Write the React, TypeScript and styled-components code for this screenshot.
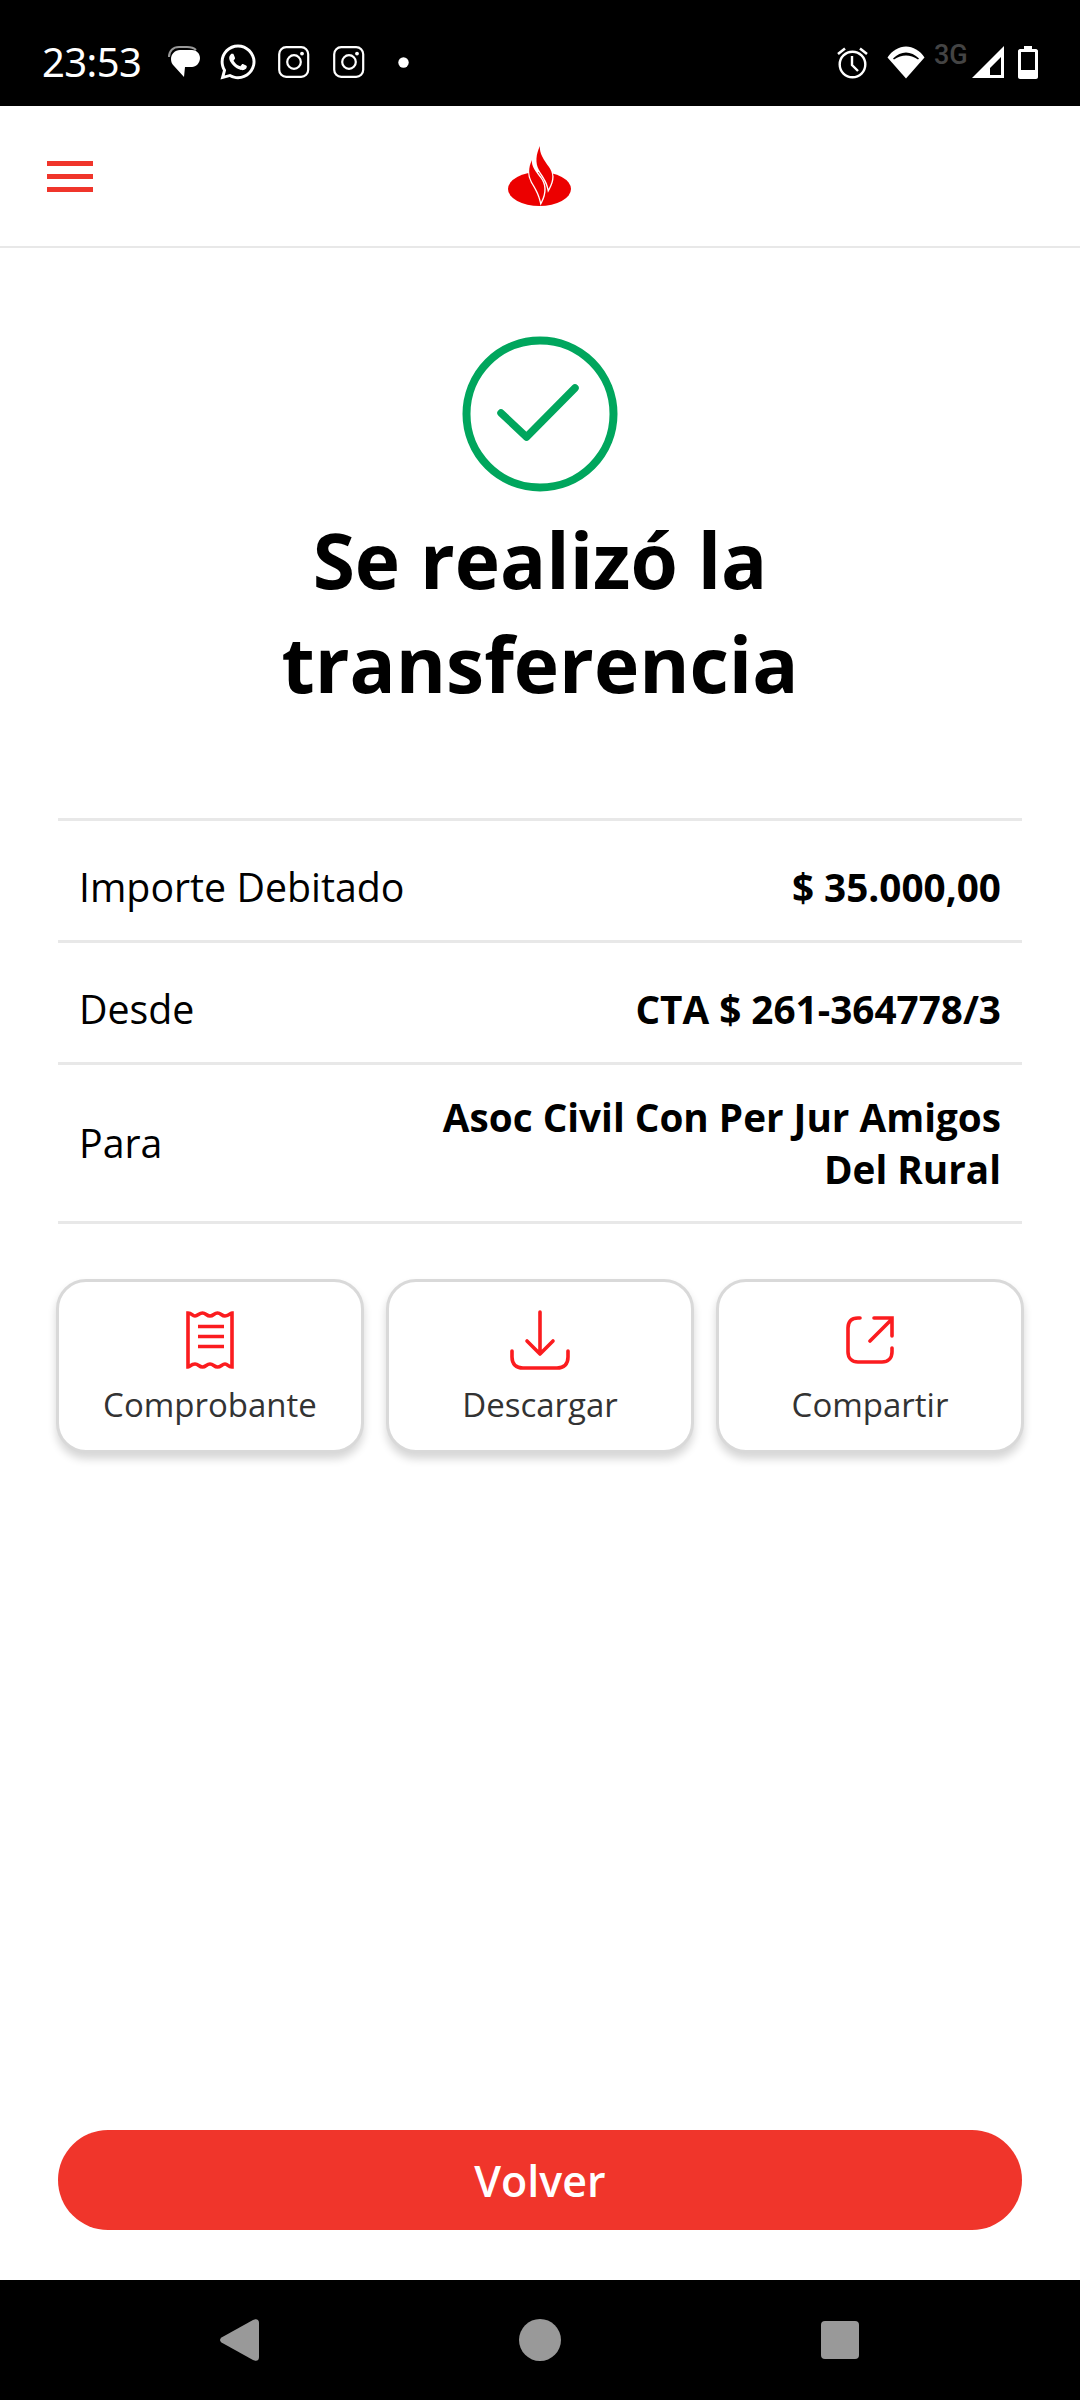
import React from "react";
import styled, { createGlobalStyle } from "styled-components";
import { FaWhatsapp } from "react-icons/fa";

const Global = createGlobalStyle`
  html, body { margin: 0; padding: 0; background: #fff; }
  * { box-sizing: border-box; }
  body { font-family: "Open Sans", "Noto Sans", sans-serif; }
`;

const Screen = styled.div`
  width: 1080px;
  height: 2400px;
  display: flex;
  flex-direction: column;
  overflow: hidden;
  background: #fff;
`;

const StatusBar = styled.div`
  height: 106px;
  flex: none;
  background: #000;
  display: flex;
  align-items: flex-start;
  justify-content: space-between;
  padding: 42px 42px 0 42px;
  color: #fff;
`;

const StatusGroup = styled.div`
  display: flex;
  align-items: center;
  height: 40px;
`;

const Time = styled.span`
  font-family: "Noto Sans", Roboto, sans-serif;
  font-size: 40px;
  line-height: 40px;
  width: 126px;
  letter-spacing: -0.6px;
  color: #fff;
`;

const StatusIcon = styled.svg<{ $gap?: number }>`
  display: block;
  flex: none;
  margin-right: ${(p) => p.$gap ?? 0}px;
`;

const WhatsappSlot = styled.span`
  display: flex;
  flex: none;
  margin: 0 20px 0 -3px;
  font-size: 40px;
  color: #fff;
`;

const ThreeG = styled.span`
  font-family: Roboto, sans-serif;
  font-weight: 500;
  font-size: 27px;
  line-height: 24px;
  width: 47px;
  padding-left: 9px;
  align-self: flex-start;
  margin-top: 1px;
  color: #444;
`;

const Header = styled.header`
  height: 142px;
  flex: none;
  display: grid;
  grid-template-columns: 1fr auto 1fr;
  border-bottom: 2px solid #e8e8e8;
  padding-top: 40px;
  align-items: start;
`;

const Burger = styled.div`
  width: 46px;
  display: flex;
  flex-direction: column;
  gap: 8px;
  margin: 15px 0 0 47px;
`;

const BurgerBar = styled.span`
  display: block;
  height: 5px;
  background: #f0352b;
`;

const Main = styled.main`
  flex: 1;
  display: flex;
  flex-direction: column;
  align-items: stretch;
  padding: 88px 58px 50px;
`;

const CheckIcon = styled.svg`
  display: block;
  align-self: center;
`;

const Title = styled.h1`
  margin: 15px 0 103px;
  font-size: 76.6px;
  line-height: 104px;
  font-weight: 700;
  text-align: center;
  color: #000;
`;

const DetailList = styled.div`
  border-top: 3px solid #e8e8e8;
`;

const DetailRow = styled.div<{ $multi?: boolean }>`
  min-height: 122px;
  display: flex;
  align-items: center;
  justify-content: space-between;
  padding: ${(p) => (p.$multi ? "26px 21px" : "40px 21px 27px")};
  border-bottom: 3px solid #e8e8e8;
`;

const DetailLabel = styled.span`
  font-size: 39.3px;
  line-height: 52px;
  color: #000;
`;

const DetailValue = styled.span`
  max-width: 600px;
  font-size: 38.7px;
  line-height: 52px;
  font-weight: 700;
  text-align: right;
  color: #000;
`;

const Actions = styled.div`
  display: grid;
  grid-template-columns: repeat(3, 308px);
  column-gap: 22px;
  margin: 55px -2px 0;
`;

const ActionButton = styled.button`
  height: 174px;
  padding: 28px 0 0;
  display: flex;
  flex-direction: column;
  align-items: center;
  background: #fff;
  border: 3px solid #d9d9d9;
  border-radius: 30px;
  box-shadow: 0 6px 9px rgba(0, 0, 0, 0.16);
  font-family: inherit;
`;

const ActionIconSlot = styled.span`
  height: 60px;
  display: flex;
  align-items: center;
  justify-content: center;
`;

const ActionLabel = styled.span`
  margin-top: 13px;
  font-size: 33px;
  line-height: 44px;
  color: #333;
`;

const BackButton = styled.button`
  margin-top: auto;
  height: 100px;
  border: none;
  border-radius: 50px;
  background: #f0352b;
  color: #fff;
  font-family: inherit;
  font-size: 43px;
  font-weight: 600;
`;

const NavBar = styled.nav`
  height: 120px;
  flex: none;
  background: #000;
  display: grid;
  grid-template-columns: repeat(3, 300px);
  justify-content: center;
  justify-items: center;
  align-items: center;
`;

const ChatIcon = () => (
  <StatusIcon $gap={21} width="32" height="34" viewBox="0 0 32 34">
    <path d="M1 12C1 6 5 2 11 2h8c4 0 7 1 9 3" fill="none" stroke="#999" strokeWidth="2" />
    <path d="M3 14c0-5 4-9 9-9h12c4 0 8 3 8 8s-4 9-8 9h-7l-1 10-10-11c-2-2-3-4-3-7z" fill="#fff" />
  </StatusIcon>
);

const InstagramIcon = ({ gap }: { gap: number }) => (
  <StatusIcon $gap={gap} width="32" height="32" viewBox="0 0 32 32" fill="none" stroke="#fff">
    <rect x="1.2" y="1.2" width="29" height="29.6" rx="7" strokeWidth="2.2" />
    <circle cx="16" cy="16" r="6.8" strokeWidth="2.2" />
    <circle cx="24" cy="7.6" r="1.9" fill="#fff" stroke="none" />
  </StatusIcon>
);

const AlarmIcon = () => (
  <StatusIcon $gap={19} width="31" height="33" viewBox="0 0 31 33" fill="none" stroke="#fff" strokeWidth="2.4">
    <circle cx="15.5" cy="18.5" r="12.8" />
    <path d="M15 10v9l6 6" />
    <path d="M1 8l7-5.5M30 8l-7-5.5" strokeWidth="2.6" />
  </StatusIcon>
);

const WifiIcon = () => (
  <StatusIcon $gap={0} width="38" height="33" viewBox="0 0 38 33">
    <path d="M0.5 11.5C5 4.5 12 0.5 19 0.5s14 4 18.5 11L19 32.5z" fill="#fff" />
    <path d="M6 12.5C10 8.5 14.5 6.5 19 6.5s9 2 13 6l-1 1C27 10.8 23 9.5 19 9.5s-8 1.3-12 4z" fill="#000" />
  </StatusIcon>
);

const SignalIcon = () => (
  <StatusIcon $gap={14} width="32" height="32" viewBox="0 0 32 32">
    <path fillRule="evenodd" d="M0 32L32 0v32zM18 29h11V11L18 22z" fill="#fff" />
  </StatusIcon>
);

const BatteryIcon = () => (
  <StatusIcon width="20" height="33" viewBox="0 0 20 33">
    <path fillRule="evenodd" d="M6 0h8v3h4c1 0 2 1 2 2v26c0 1-1 2-2 2H2c-1 0-2-1-2-2V5c0-1 1-2 2-2h4zM3 6v18h14V6z" fill="#fff" />
  </StatusIcon>
);

const SantanderLogo = () => (
  <svg width="64" height="61" viewBox="0 0 64 61">
    <ellipse cx="31.5" cy="43" rx="31.5" ry="17" fill="#ec0000" />
    <path
      d="M24 14C23 20 28 26 32.500 32C37 38 38 46 33 56C31 47 27 41 24 36C20.500 29 20 22 24 14z"
      fill="#ec0000" stroke="#fff" strokeWidth="2.600" paintOrder="stroke"
    />
    <path
      d="M32 0C31 7 36 14 41 21C45 27 46 33 40.500 43C39 35 34 29 31 24C27 17 28 8 32 0z"
      fill="#ec0000" stroke="#fff" strokeWidth="2.600" paintOrder="stroke"
    />
  </svg>
);

const ReceiptIcon = () => (
  <svg width="48" height="58" viewBox="0 0 48 58" fill="none" stroke="#fb1c1f" strokeWidth="3.600">
    <path d="M2 2c4 0 4 3 7 3s4-3 7.500-3 4 3 7.500 3 4-3 7.500-3 4 3 7.500 3S45 2 46 2v54c-4 0-4-3-7-3s-4 3-7.500 3-4-3-7.500-3-4 3-7.500 3-4-3-7.500-3S3 56 2 56z" />
    <path d="M12 15.500h26M12 25.500h26M12 35.500h26" strokeWidth="3.600" />
  </svg>
);

const DownloadIcon = () => (
  <svg width="60" height="60" viewBox="0 0 60 60" fill="none" stroke="#fb1c1f" strokeWidth="3.600" strokeLinecap="round">
    <path d="M30 2v42M17 31l13 13 13-13" strokeLinejoin="round" />
    <path d="M2 41v6c0 7 4 11 11 11h34c7 0 11-4 11-11v-6" />
  </svg>
);

const ShareIcon = () => (
  <svg width="48" height="48" viewBox="0 0 48 48" fill="none" stroke="#fb1c1f" strokeWidth="3.600" strokeLinecap="round">
    <path d="M14 2h-2C5 2 2 6 2 12v24c0 6 4 10 10 10h24c6 0 10-4 10-10v-4" />
    <path d="M24 25L46 3M28 2h18v18" />
  </svg>
);

const rows: { label: string; value: string; multi?: boolean }[] = [
  { label: "Importe Debitado", value: "$ 35.000,00" },
  { label: "Desde", value: "CTA $ 261-364778/3" },
  { label: "Para", value: "Asoc Civil Con Per Jur Amigos Del Rural", multi: true },
];

export default function App() {
  return (
    <Screen>
      <Global />
      <StatusBar>
        <StatusGroup>
          <Time>23:53</Time>
          <ChatIcon />
          <WhatsappSlot><FaWhatsapp /></WhatsappSlot>
          <InstagramIcon gap={23} />
          <InstagramIcon gap={33} />
          <StatusIcon width="11" height="11" viewBox="0 0 11 11">
            <circle cx="5.5" cy="5.5" r="5.2" fill="#fff" />
          </StatusIcon>
        </StatusGroup>
        <StatusGroup>
          <AlarmIcon />
          <WifiIcon />
          <ThreeG>3G</ThreeG>
          <SignalIcon />
          <BatteryIcon />
        </StatusGroup>
      </StatusBar>
      <Header>
        <Burger>
          <BurgerBar />
          <BurgerBar />
          <BurgerBar />
        </Burger>
        <SantanderLogo />
      </Header>
      <Main>
        <CheckIcon width="156" height="156" viewBox="0 0 156 156" fill="none" stroke="#00a65d">
          <circle cx="78" cy="78" r="73.500" strokeWidth="8" />
          <path d="M39 77l25.500 24L113 52" strokeWidth="7.500" strokeLinecap="round" strokeLinejoin="round" />
        </CheckIcon>
        <Title>Se realizó la<br />transferencia</Title>
        <DetailList>
          {rows.map((r) => (
            <DetailRow key={r.label} $multi={r.multi}>
              <DetailLabel>{r.label}</DetailLabel>
              <DetailValue>{r.value}</DetailValue>
            </DetailRow>
          ))}
        </DetailList>
        <Actions>
          <ActionButton>
            <ActionIconSlot><ReceiptIcon /></ActionIconSlot>
            <ActionLabel>Comprobante</ActionLabel>
          </ActionButton>
          <ActionButton>
            <ActionIconSlot><DownloadIcon /></ActionIconSlot>
            <ActionLabel>Descargar</ActionLabel>
          </ActionButton>
          <ActionButton>
            <ActionIconSlot><ShareIcon /></ActionIconSlot>
            <ActionLabel>Compartir</ActionLabel>
          </ActionButton>
        </Actions>
        <BackButton>Volver</BackButton>
      </Main>
      <NavBar>
        <svg width="40" height="42" viewBox="0 0 40 42">
          <path d="M1.500 18.500L33 1c3-1.500 6-1 6 3v34c0 4-3 4.500-6 3L1.500 23.500c-2-1.500-2-3.500 0-5z" fill="#999" />
        </svg>
        <svg width="42" height="42" viewBox="0 0 42 42"><circle cx="21" cy="21" r="21" fill="#999" /></svg>
        <svg width="38" height="38" viewBox="0 0 38 38"><rect width="38" height="38" rx="4" fill="#999" /></svg>
      </NavBar>
    </Screen>
  );
}
